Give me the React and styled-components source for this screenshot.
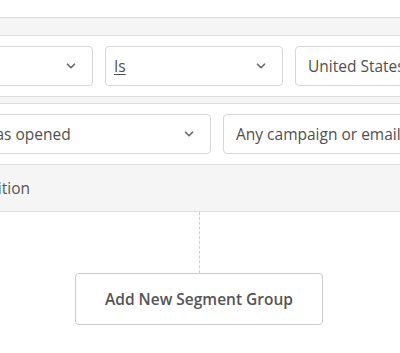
import React from "react";
import styled, { createGlobalStyle } from "styled-components";

const Global = createGlobalStyle`
  html, body { margin: 0; padding: 0; background: #fff; }
  body { font-family: "Open Sans", "Liberation Sans", sans-serif; color: #555; }
  * { box-sizing: border-box; }
`;

const Canvas = styled.div`
  width: 400px;
  height: 353px;
  overflow: hidden;
  padding-top: 17px;
  background: #fff;
`;

const Group = styled.div`
  margin-left: -102px;
  width: 700px;
  background: #f5f5f5;
  border: 1px solid #dcdcdc;
  padding-top: 17px;
`;

const ConditionRow = styled.div`
  display: flex;
  gap: 12px;
  padding: 10px 16px;
  background: #fff;
  border-top: 1px solid #dcdcdc;
  border-bottom: 1px solid #dcdcdc;
  margin-bottom: ${(p) => (p.$last ? "0" : "6px")};
`;

const Select = styled.div`
  flex: none;
  width: ${(p) => p.$w}px;
  height: 40px;
  display: flex;
  align-items: center;
  justify-content: space-between;
  padding: 0 16px 0 ${(p) => p.$pl ?? 12}px;
  border: 1px solid #d6d6d6;
  border-radius: 4px;
  background: #fff;
  font-size: 15.5px;
  color: #505050;
  white-space: nowrap;
`;

const Value = styled.span`
  text-decoration: ${(p) => (p.$underline ? "underline" : "none")};
  text-underline-offset: 2px;
`;

const Footer = styled.div`
  height: 46px;
  display: flex;
  align-items: center;
  padding-left: 28px;
  font-size: 15.5px;
  color: #555;
  white-space: nowrap;
`;

const Bottom = styled.div`
  width: 398px;
  display: flex;
  flex-direction: column;
  align-items: center;
`;

const Connector = styled.div`
  width: 0;
  height: 61px;
  border-left: 1px dashed #cfcfcf;
`;

const Button = styled.button`
  width: 248px;
  height: 52px;
  border: 1px solid #cccccc;
  border-radius: 4px;
  background: #fff;
  font-family: "Open Sans", "Liberation Sans", sans-serif;
  font-size: 15.5px;
  font-weight: 600;
  color: #555;
  padding: 0;
`;

const Chevron = () => (
  <svg width="10" height="6" viewBox="0 0 10 6" fill="none">
    <polyline points="1.5,1.2 5,4.7 8.5,1.2" stroke="#666" strokeWidth="1.6" strokeLinecap="round" strokeLinejoin="round" />
  </svg>
);

export default function App() {
  return (
    <>
      <Global />
      <Canvas>
        <Group>
          <ConditionRow>
            <Select $w={178}>
              <Value />
              <Chevron />
            </Select>
            <Select $w={178} $pl={8}>
              <Value $underline>Is</Value>
              <Chevron />
            </Select>
            <Select $w={250}>
              <Value>United States</Value>
            </Select>
          </ConditionRow>
          <ConditionRow $last>
            <Select $w={46}>
              <Value />
            </Select>
            <Select $w={238}>
              <Value>has opened</Value>
              <Chevron />
            </Select>
            <Select $w={250}>
              <Value>Any campaign or email</Value>
            </Select>
          </ConditionRow>
          <Footer>Add Condition</Footer>
        </Group>
        <Bottom>
          <Connector />
          <Button>Add New Segment Group</Button>
        </Bottom>
      </Canvas>
    </>
  );
}
